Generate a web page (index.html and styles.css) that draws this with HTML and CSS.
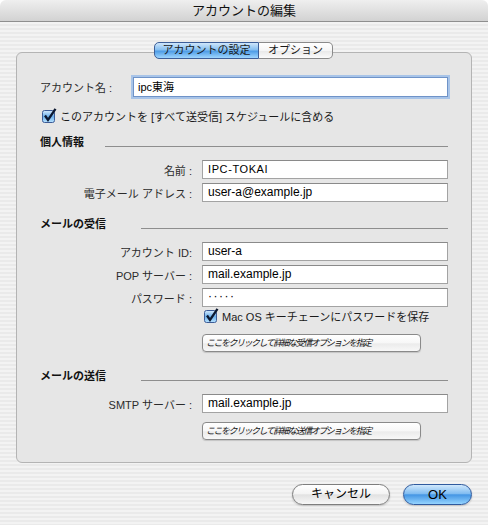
FILE: index.html
```html
<!DOCTYPE html>
<html lang="ja">
<head>
<meta charset="utf-8">
<title>アカウントの編集</title>
<link rel="stylesheet" href="styles.css">
</head>
<body>
<div class="window">
  <div class="titlebar">アカウントの編集</div>
  <div class="content">
    <div class="group">
      <div class="tabs"><span class="tab tab-on">アカウントの設定</span><span class="tab tab-off">オプション</span></div>

      <div class="row-acct">
        <span class="lbl-plain">アカウント名 :</span>
        <div class="field field-focus">ipc東海</div>
      </div>

      <div class="check check-main">
        <svg class="cbox" width="15" height="15" viewBox="0 0 15 15"><defs><linearGradient id="cb1" x1="0" y1="0" x2="0" y2="1"><stop offset="0" stop-color="#d7ebfc"/><stop offset="0.5" stop-color="#6cb0ec"/><stop offset="1" stop-color="#b9e3ff"/></linearGradient></defs><rect x="0.5" y="2.5" width="12" height="12" rx="2" fill="url(#cb1)" stroke="#3d5c96"/><path d="M3 7.5 L6 12 L13.5 0.8" fill="none" stroke="#0c1830" stroke-width="2.3"/></svg>
        <span>このアカウントを [すべて送受信] スケジュールに含める</span>
      </div>

      <div class="section sec-personal"><span class="sec-title">個人情報</span><span class="sec-line"></span></div>
      <div class="frow first"><span class="flabel">名前 :</span><div class="field mono">IPC-TOKAI</div></div>
      <div class="frow"><span class="flabel">電子メール アドレス :</span><div class="field">user-a@example.jp</div></div>

      <div class="section sec-mail sec-recv"><span class="sec-title">メールの受信</span><span class="sec-line"></span></div>
      <div class="frow first"><span class="flabel">アカウント ID:</span><div class="field">user-a</div></div>
      <div class="frow"><span class="flabel">POP サーバー :</span><div class="field">mail.example.jp</div></div>
      <div class="frow"><span class="flabel">パスワード :</span><div class="field dots">·····</div></div>

      <div class="check check-key">
        <svg class="cbox" width="15" height="15" viewBox="0 0 15 15"><defs><linearGradient id="cb2" x1="0" y1="0" x2="0" y2="1"><stop offset="0" stop-color="#d7ebfc"/><stop offset="0.5" stop-color="#6cb0ec"/><stop offset="1" stop-color="#b9e3ff"/></linearGradient></defs><rect x="0.5" y="2.5" width="12" height="12" rx="2" fill="url(#cb2)" stroke="#3d5c96"/><path d="M3 7.5 L6 12 L13.5 0.8" fill="none" stroke="#0c1830" stroke-width="2.3"/></svg>
        <span>Mac OS キーチェーンにパスワードを保存</span>
      </div>
      <div class="opt-btn opt-recv">ここをクリックして詳細な受信オプションを指定</div>

      <div class="section sec-mail sec-send"><span class="sec-title">メールの送信</span><span class="sec-line"></span></div>
      <div class="frow first"><span class="flabel">SMTP サーバー :</span><div class="field">mail.example.jp</div></div>
      <div class="opt-btn opt-send">ここをクリックして詳細な送信オプションを指定</div>
    </div>

    <div class="footer">
      <div class="btn btn-cancel">キャンセル</div>
      <div class="btn btn-ok">OK</div>
    </div>
  </div>
</div>
</body>
</html>
```

FILE: styles.css
```css
* { box-sizing: border-box; }

html, body {
  margin: 0;
  padding: 0;
  background: #ffffff;
}

body {
  font-family: "Liberation Sans", "Noto Sans CJK JP", sans-serif;
  color: #1a1a1a;
}

.window {
  width: 488px;
  height: 525px;
  display: flex;
  flex-direction: column;
  overflow: hidden;
}

.titlebar {
  height: 22px;
  flex: none;
  border-radius: 6px 6px 0 0;
  background: linear-gradient(#efefef, #d2d2d2);
  border-bottom: 1px solid #8f8f8f;
  font-size: 13px;
  line-height: 21px;
  text-align: center;
  color: #111;
}

.content {
  flex: 1;
  background: repeating-linear-gradient(to bottom, #f3f3f3 0, #f3f3f3 2px, #eaeaea 2px, #eaeaea 4px);
  padding: 30px 16px 0 16px;
}

.group {
  position: relative;
  height: 411px;
  border: 1px solid #b4b4b4;
  border-radius: 6px;
  background: #e6e6e6;
  padding: 24px 23px 0 23px;
  display: flex;
  flex-direction: column;
}

/* tabs */
.tabs {
  position: absolute;
  top: -11px;
  left: 137px;
  display: flex;
  height: 17px;
}

.tab {
  font-size: 11px;
  line-height: 15px;
  text-align: center;
  height: 17px;
}

.tab-on {
  width: 105px;
  border: 1px solid #3c5e98;
  border-radius: 5px 0 0 5px;
  background: linear-gradient(#cfe6fb 0%, #86bff0 45%, #4f9de6 55%, #9fd6ff 100%);
}

.tab-off {
  width: 74px;
  border: 1px solid #8a8a8a;
  border-left: 0;
  border-radius: 0 5px 5px 0;
  background: linear-gradient(#ffffff 0%, #f6f6f6 50%, #e9e9e9 55%, #fbfbfb 100%);
}

/* account row */
.row-acct {
  display: flex;
  align-items: center;
  height: 20px;
}

.lbl-plain {
  width: 93px;
  font-size: 11px;
  color: #2b2b2b;
}

.field {
  flex: 1;
  height: 19px;
  background: #fff;
  border: 1px solid #a3a3a3;
  border-top-color: #8a8a8a;
  font-size: 12px;
  line-height: 17px;
  padding-left: 5px;
  color: #000;
  white-space: nowrap;
}

.field-focus {
  height: 20px;
  border: 1px solid #6f93c8;
  box-shadow: 0 0 0 2px #a8c4e8;
  padding-left: 4px;
  line-height: 18px;
  font-size: 11px;
}

.mono {
  font-size: 11px;
  letter-spacing: 0.6px;
}

.dots {
  font-size: 12px;
  letter-spacing: 1.5px;
  line-height: 15px;
}

/* checkboxes */
.check {
  display: flex;
  align-items: center;
  height: 15px;
  font-size: 11px;
  color: #1a1a1a;
}

.check .cbox {
  flex: none;
  margin-right: 3px;
}

.check-main {
  margin-top: 11px;
  margin-left: 2px;
}

.check-key {
  margin-top: 1px;
  margin-left: 164px;
}

/* sections */
.section {
  display: flex;
  align-items: flex-end;
  height: 14px;
}

.sec-title {
  font-size: 11px;
  font-weight: bold;
  line-height: 14px;
  flex: none;
  color: #111;
}

.sec-line {
  flex: 1;
  height: 1px;
  background: #8e8e8e;
  margin-bottom: 2px;
}

.sec-personal { margin-top: 12px; }
.sec-personal .sec-title { width: 65px; }
.sec-mail .sec-title { width: 101px; }
.sec-recv { margin-top: 15px; }
.sec-send { margin-top: 17px; }

/* form rows */
.frow {
  display: flex;
  align-items: center;
  margin-top: 4px;
}

.frow.first { margin-top: 11px; }

.flabel {
  width: 152px;
  margin-right: 10px;
  text-align: right;
  font-size: 11px;
  color: #2b2b2b;
}

/* small option buttons */
.opt-btn {
  margin-left: 162px;
  width: 219px;
  height: 18px;
  border: 1px solid #8a8a8a;
  border-radius: 4px;
  background: linear-gradient(#ffffff 0%, #f7f7f7 50%, #ebebeb 55%, #f8f8f8 100%);
  box-shadow: 0 1px 1px rgba(0,0,0,0.15);
  font-size: 9px;
  font-style: italic;
  letter-spacing: -1.5px;
  line-height: 16px;
  padding-left: 3px;
  color: #111;
  white-space: nowrap;
}

.opt-recv { margin-top: 11px; }
.opt-send { margin-top: 9px; }

/* footer buttons */
.footer {
  display: flex;
  justify-content: flex-end;
  gap: 13px;
  padding-top: 21px;
}

.btn {
  height: 21px;
  border-radius: 11px;
  font-size: 12px;
  line-height: 19px;
  text-align: center;
  color: #000;
  box-shadow: 0 1px 2px rgba(0,0,0,0.2);
}

.btn-cancel {
  width: 98px;
  border: 1px solid #7e7e7e;
  background: linear-gradient(#ffffff 0%, #f4f4f4 45%, #e2e2e2 52%, #f7f7f7 100%);
}

.btn-ok {
  width: 69px;
  border: 1px solid #2f5a9e;
  background: linear-gradient(#d0e8fc 0%, #82bdf1 45%, #4596e4 52%, #95d4ff 100%);
  font-size: 13px;
}
```
